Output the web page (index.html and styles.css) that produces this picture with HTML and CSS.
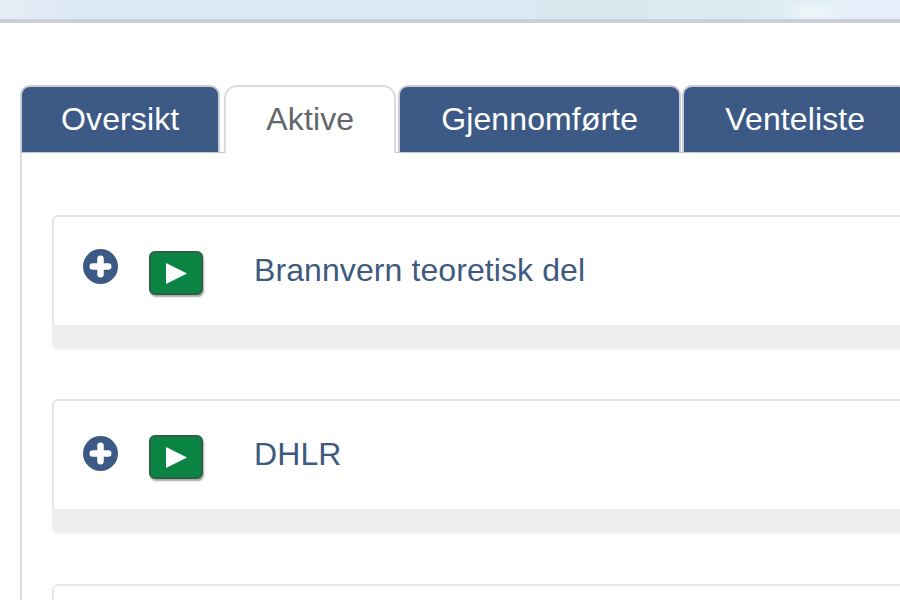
FILE: index.html
```html
<!DOCTYPE html>
<html lang="nb">
<head>
  <meta charset="UTF-8" />
  <title>Kurs</title>
  <link rel="stylesheet" href="styles.css">
</head>
<body>
  <header class="banner"></header>

  <main class="page">
    <nav class="tabs">
      <a class="tab tab-first" href="#oversikt">Oversikt</a>
      <a class="tab active" href="#aktive">Aktive</a>
      <a class="tab" href="#gjennomforte">Gjennomførte</a>
      <a class="tab" href="#venteliste">Venteliste</a>
    </nav>

    <section class="panel" id="aktive">
      <article class="course">
        <div class="course-body">
          <button class="expand" aria-label="Vis mer">
            <svg viewBox="0 0 35 35" width="35" height="35">
              <circle cx="17.5" cy="17.5" r="17.5" fill="#3d5a87" />
              <path d="M17.5 9.75v15.5M9.75 17.5h15.5" stroke="#fff" stroke-width="6.5" stroke-linecap="round" />
            </svg>
          </button>
          <button class="play" aria-label="Start">
            <svg viewBox="0 0 21 21" width="21" height="21">
              <polygon points="0,0 21,10.5 0,21" fill="#fff" />
            </svg>
          </button>
          <h2 class="course-title">Brannvern teoretisk del</h2>
        </div>
        <div class="course-foot"></div>
      </article>

      <article class="course">
        <div class="course-body">
          <button class="expand" aria-label="Vis mer">
            <svg viewBox="0 0 35 35" width="35" height="35">
              <circle cx="17.5" cy="17.5" r="17.5" fill="#3d5a87" />
              <path d="M17.5 9.75v15.5M9.75 17.5h15.5" stroke="#fff" stroke-width="6.5" stroke-linecap="round" />
            </svg>
          </button>
          <button class="play" aria-label="Start">
            <svg viewBox="0 0 21 21" width="21" height="21">
              <polygon points="0,0 21,10.5 0,21" fill="#fff" />
            </svg>
          </button>
          <h2 class="course-title">DHLR</h2>
        </div>
        <div class="course-foot"></div>
      </article>

      <article class="course">
        <div class="course-body"></div>
      </article>
    </section>
  </main>
</body>
</html>
```

FILE: styles.css
```css
html, body {
  height: 100%;
  overflow: hidden;
}
body {
  font-family: "Liberation Sans", Arial, sans-serif;
  margin: 0;
  background-color: #fff;
  color: #3d5a87;
}
.banner {
  height: 19px;
  border-bottom: 4px solid #c9d0dc;
  background:
    radial-gradient(ellipse 30px 14px at 812px 12px, #eef6fa 0%, rgba(238, 246, 250, 0) 100%),
    linear-gradient(90deg, #e6edf6 0%, #dde9f3 8%, #dde9f3 55%, #d9e7ee 66%, #dcebf2 84%, #e3f0f8 92%, #e7effa 96%, #e6eefa 100%);
}
.page {
  width: 1100px;
  padding: 62px 0 0 20px;
}
.tabs {
  position: relative;
  display: flex;
  align-items: flex-start;
  height: 68px;
  margin-bottom: -1px;
}
.tab {
  box-sizing: border-box;
  height: 67px;
  padding: 14px 41px 0;
  margin-right: 1px;
  border: 2px solid #c8ccd4;
  border-bottom: 0;
  border-radius: 10px 10px 0 0;
  background-color: #3d5a87;
  color: #fff;
  font-size: 32px;
  letter-spacing: 0.12px;
  line-height: 37px;
  text-decoration: none;
}
.tab-first {
  margin-right: 4px;
  padding: 14px 39px 0;
}
.tab.active {
  height: 68px;
  margin-right: 2px;
  padding: 14px 40px 0;
  border-color: #dcdcdc;
  border-radius: 13px 13px 0 0;
  background-color: #fff;
  color: #63666a;
}
.panel {
  padding: 62px 0 0 30px;
  border-left: 2px solid #ddd;
  border-top: 1px solid #c0c5ce;
}
.course {
  margin-bottom: 50.4px;
  border: 2px solid #e6e6e6;
  border-bottom: 0;
  border-radius: 6px;
  box-shadow: 0 2px 3px rgba(0, 0, 0, 0.04);
}
.course-body {
  display: flex;
  align-items: flex-start;
  height: 108px;
  padding: 0 0 0 29px;
}
.course-foot {
  height: 24px;
  margin-left: -2px;
  background-color: #eee;
  border-radius: 0 0 0 6px;
}
.expand {
  width: 35px;
  height: 35px;
  margin-top: 35px;
  padding: 0;
  border: 0;
  background: none;
}
.course:first-child .expand {
  margin-top: 32px;
}
.expand svg,
.play svg {
  display: block;
}
.play {
  box-sizing: border-box;
  display: flex;
  align-items: center;
  justify-content: center;
  width: 54px;
  height: 44px;
  margin: 34px 0 0 31px;
  padding: 0;
  border: 2px solid #2f5f42;
  border-radius: 6px;
  background-color: #0a8442;
  box-shadow: 1px 2px 2px rgba(0, 0, 0, 0.35);
}
.course-title {
  margin: 35px 0 0 51px;
  font-size: 32px;
  font-weight: normal;
  letter-spacing: 0.09px;
  line-height: 37px;
  color: #3f5a80;
}
```
